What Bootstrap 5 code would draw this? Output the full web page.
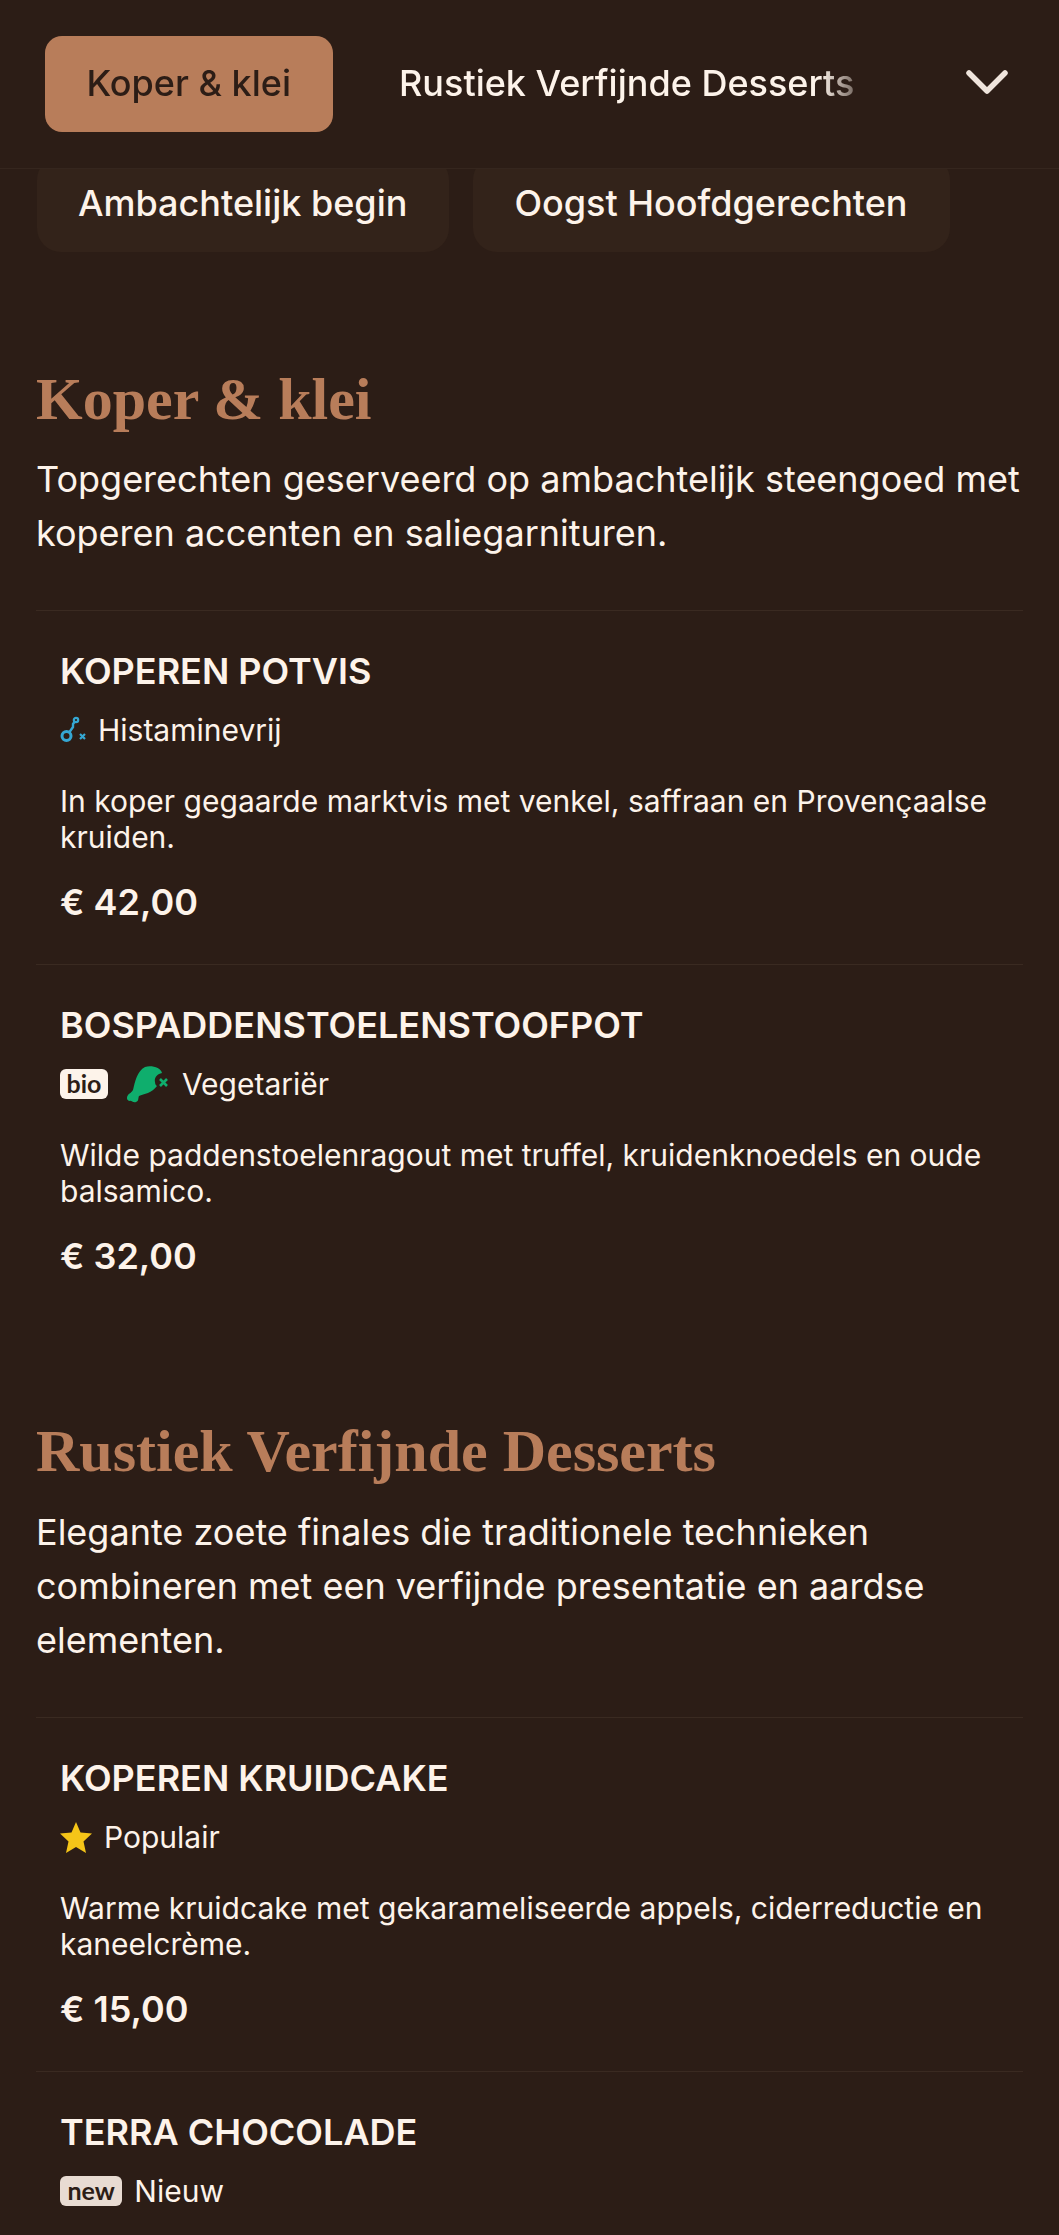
<!DOCTYPE html>
<html lang="nl"><head><meta charset="utf-8"><title>Menu</title>
<link href="https://cdn.jsdelivr.net/npm/bootstrap@5.3.0/dist/css/bootstrap.min.css" rel="stylesheet">
<style>
html,body{background:#2c1d16;}
body{font-family:Inter,"Liberation Sans",sans-serif;color:#fdf3ea;overflow-x:hidden;}
.top-strip{position:relative;z-index:2;background:#2c1d16;height:169px;border-bottom:1px solid #35261e;padding-left:45px;}
.tab-scroll{width:830px;overflow:hidden;gap:25px;margin-top:36px;-webkit-mask-image:linear-gradient(90deg,#000 93.4%,transparent 100%);mask-image:linear-gradient(90deg,#000 93.4%,transparent 100%);}
.tab-pill{flex:none;height:96px;line-height:94px;padding:0 41.5px;border-radius:17px;font-size:36px;font-weight:500;color:#fdf3ea;white-space:nowrap;}
.tab-pill.is-on{background:#b87d5a;color:#2c1d16;}
.chev{margin-left:auto;margin-right:50px;margin-top:68px;width:44px;height:28px;flex:none;}
.sub-tabs{margin-top:-13px;padding-left:37px;gap:24px;}
.sub-pill{height:96px;line-height:94px;padding:0 42px 0 41px;border-radius:24px;background:#33231a;font-size:36px;font-weight:500;white-space:nowrap;color:#fdf3ea;}
.menu-sec{padding:0 36px;}
.sec-title{font-family:"Liberation Serif",serif;font-weight:700;font-size:60px;line-height:76px;color:#b87d5a;margin:0;}
.sec-desc{font-size:36px;line-height:54px;margin:15px 0 0;}
.dish{border-top:1px solid #3a2a21;padding:0 24px;}
.dish-name{font-size:36px;font-weight:600;line-height:42px;margin:0;padding-top:39px;}
.dish-tags{height:42px;margin-top:17px;font-size:30px;line-height:42px;gap:12px;}
.dish-text{font-size:30px;line-height:36px;margin:32px 0 0;}
.dish-price{font-size:36px;font-weight:600;line-height:44px;margin-top:25px;padding-bottom:40px;}
.tag-chip{font-family:Lato,"Liberation Sans",sans-serif;font-size:25px;font-weight:700;line-height:28px;height:30px;padding:0 6.5px;border-radius:6px;background:#fdf3ea;color:#2c1d16;}
.tag-chip.soft{background:#e8dbd2;padding:0 7.5px;}
.leg-gap{margin-left:6px;}
</style></head><body>
<div class="top-strip d-flex align-items-start">
  <div class="tab-scroll d-flex">
    <div class="tab-pill is-on">Koper &amp; klei</div>
    <div class="tab-pill">Rustiek Verfijnde Desserts</div>
  </div>
  <svg class="chev" viewBox="0 0 44 28"><path d="M4 5 L22 23 L40 5" fill="none" stroke="#efe4dc" stroke-width="5.5" stroke-linecap="round" stroke-linejoin="round"/></svg>
</div>
<div class="sub-tabs d-flex">
  <div class="sub-pill">Ambachtelijk begin</div>
  <div class="sub-pill">Oogst Hoofdgerechten</div>
</div>
<section class="menu-sec" style="padding-top:109px">
  <h2 class="sec-title">Koper &amp; klei</h2>
  <p class="sec-desc">Topgerechten geserveerd op ambachtelijk steengoed met koperen accenten en saliegarnituren.</p>
  <div class="dish" style="margin-top:50px">
    <h3 class="dish-name">KOPEREN POTVIS</h3>
    <div class="dish-tags d-flex align-items-center">
      <svg width="26" height="28" viewBox="0 0 26 28" fill="none" stroke="#35a7d3" stroke-width="3"><circle cx="6.5" cy="20" r="4.5"/><path d="M9.5 16 L13 11 V8 L14.5 6" stroke-width="2.4"/><circle cx="16" cy="4" r="2.2" stroke-width="2.2"/><path d="M20 18 L25 23 M25 18 L20 23" stroke-width="2.2"/></svg>
      <span>Histaminevrij</span>
    </div>
    <p class="dish-text">In koper gegaarde marktvis met venkel, saffraan en Provençaalse kruiden.</p>
    <div class="dish-price">€ 42,00</div>
  </div>
  <div class="dish">
    <h3 class="dish-name">BOSPADDENSTOELENSTOOFPOT</h3>
    <div class="dish-tags d-flex align-items-center">
      <span class="tag-chip">bio</span>
      <svg class="leg-gap" width="44" height="37" viewBox="0 0 44 37"><path d="M19 1 C26 -1 35 2 36 7 C31 8 28 12 29 16 C29 19 31 20 31 20 C26 27 18 28 13 30 C12 32 13 35 10 36 C7 37 5 34 4 35 C1 35 0 32 2 29 C4 27 5 27 7 24 C9 16 11 5 19 1Z" fill="#0fae6d"/><path d="M34 13 L41 20 M41 13 L34 20" stroke="#0fae6d" stroke-width="2.6" fill="none"/></svg>
      <span>Vegetariër</span>
    </div>
    <p class="dish-text">Wilde paddenstoelenragout met truffel, kruidenknoedels en oude balsamico.</p>
    <div class="dish-price pb-0">€ 32,00</div>
  </div>
</section>
<section class="menu-sec" style="padding-top:135px">
  <h2 class="sec-title">Rustiek Verfijnde Desserts</h2>
  <p class="sec-desc" style="margin-top:16px">Elegante zoete finales die traditionele technieken combineren met een verfijnde presentatie en aardse elementen.</p>
  <div class="dish" style="margin-top:50px">
    <h3 class="dish-name">KOPEREN KRUIDCAKE</h3>
    <div class="dish-tags d-flex align-items-center">
      <svg width="32" height="31" viewBox="0 0 32 31"><path d="M16 0 L20.5 10.5 L32 11.5 L23.5 19.5 L26 31 L16 25 L6 31 L8.5 19.5 L0 11.5 L11.5 10.5 Z" fill="#f5c518"/></svg>
      <span>Populair</span>
    </div>
    <p class="dish-text">Warme kruidcake met gekarameliseerde appels, ciderreductie en kaneelcrème.</p>
    <div class="dish-price">€ 15,00</div>
  </div>
  <div class="dish">
    <h3 class="dish-name">TERRA CHOCOLADE</h3>
    <div class="dish-tags d-flex align-items-center">
      <span class="tag-chip soft">new</span>
      <span>Nieuw</span>
    </div>
  </div>
</section>
<script src="https://cdn.jsdelivr.net/npm/bootstrap@5.3.0/dist/js/bootstrap.bundle.min.js"></script>
</body></html>
